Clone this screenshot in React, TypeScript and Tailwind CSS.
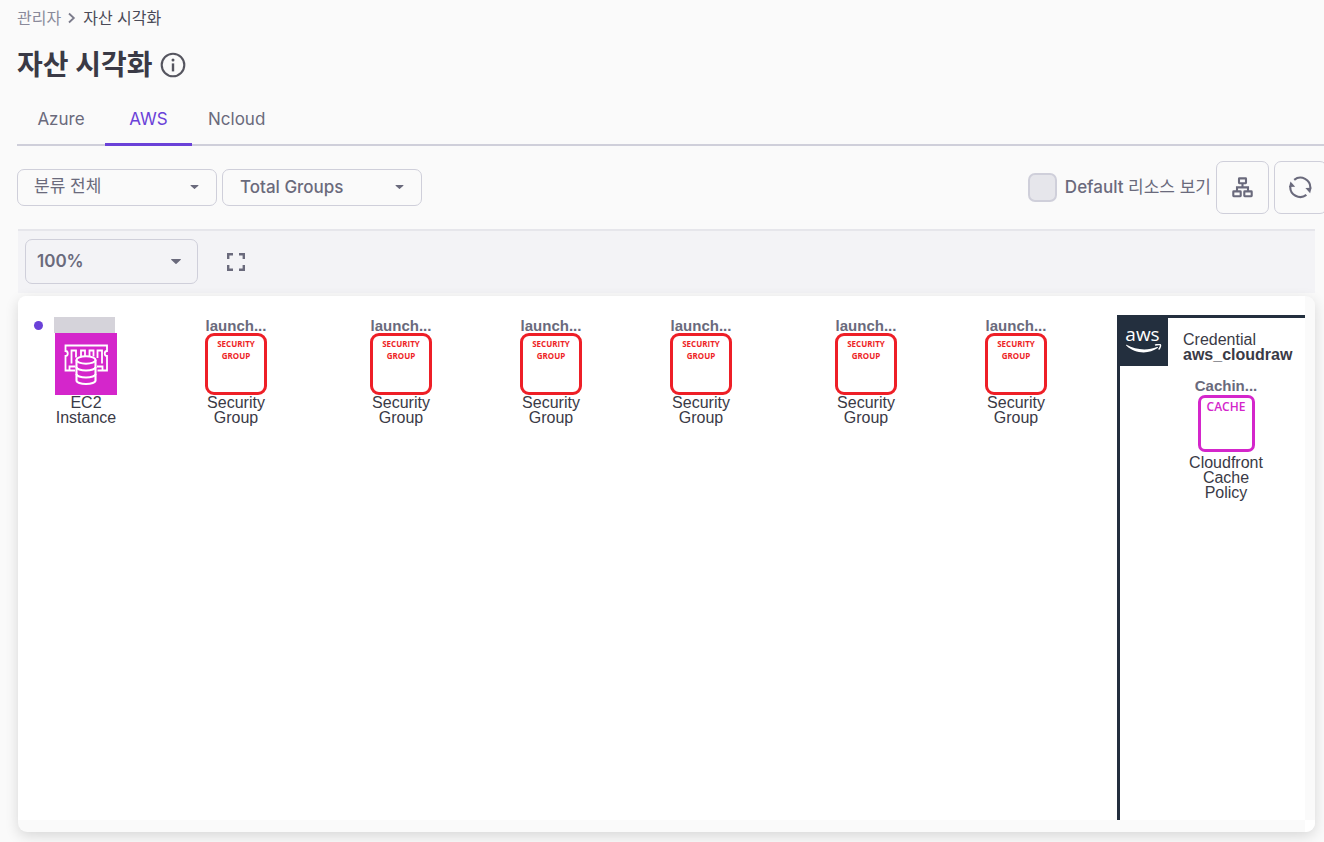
import { useState } from "react";
import type { ReactNode } from "react";

const tabs = ["Azure", "AWS", "Ncloud"];

const securityGroups = [218, 383, 533, 683, 848, 998];

function Caret({ size }: { size: string }) {
  return (
    <svg
      viewBox="0 0 10 5"
      className={`pointer-events-none absolute top-1/2 -translate-y-[3px] ${size}`}
      fill="#6a6a7c"
      aria-hidden="true"
    >
      <path d="M.6 0h8.8c.5 0 .7.5.4.8L5.5 4.8a.7.7 0 0 1-1 0L.2.8C-.1.5.1 0 .6 0Z" />
    </svg>
  );
}

function Dropdown({
  label,
  options,
  box,
  text,
  caret,
}: {
  label: string;
  options: string[];
  box: string;
  text: string;
  caret: string;
}) {
  return (
    <div className={`relative ${box}`}>
      <select
        aria-label={label}
        className={`h-full w-full appearance-none rounded-[7px] border border-[#cfcfda] bg-transparent text-[17px] text-[#6a6a7c] ${text}`}
      >
        {options.map((o) => (
          <option key={o}>{o}</option>
        ))}
      </select>
      <Caret size={caret} />
    </div>
  );
}

function InfoIcon() {
  return (
    <svg viewBox="0 0 26 26" className="size-[26px]" fill="none" aria-hidden="true">
      <circle cx="13" cy="13" r="11.3" stroke="#55555f" strokeWidth="2.1" />
      <circle cx="13" cy="7.9" r="1.5" fill="#55555f" />
      <path d="M13 11.4v8" stroke="#55555f" strokeWidth="2.4" />
    </svg>
  );
}

function TreeIcon() {
  return (
    <svg viewBox="0 0 22 22" className="size-[22px]" fill="none" stroke="#6a6a7c" strokeWidth="2.1" aria-hidden="true">
      <rect x="7" y="1.400" width="7" height="4.800" rx=".4" />
      <rect x="1.300" y="14.400" width="7.400" height="4.800" rx=".4" />
      <rect x="12.300" y="14.400" width="7.400" height="4.800" rx=".4" />
      <path d="M10.500 6.200v4M5 14.400v-4h11v4" />
    </svg>
  );
}

function RefreshIcon() {
  return (
    <svg viewBox="0 0 24 24" className="size-[24px]" fill="none" aria-hidden="true">
      <g stroke="#6a6a7c" strokeWidth="2.1">
        <path d="M5.200 3.800A10 10 0 0 1 21.300 12.500" />
        <path d="M17.400 18.900A10 10 0 0 1 1.300 10.200" />
      </g>
      <path d="M16.400 12l6.200-.2-1.500 5.400Z" fill="#6a6a7c" />
      <path d="M6.200 10.700 0 10.900l1.500-5.400Z" fill="#6a6a7c" />
    </svg>
  );
}

function FullscreenIcon() {
  return (
    <svg viewBox="0 0 18 18" className="size-[18px]" fill="none" stroke="#6a6a7c" strokeWidth="2.4" aria-hidden="true">
      <path d="M1.2 6V1.2H6M12 1.2h4.8V6M16.8 12v4.8H12M6 16.8H1.2V12" />
    </svg>
  );
}

function Ec2Icon() {
  return (
    <svg viewBox="0 0 62 62" className="size-[62px]" fill="none" aria-hidden="true">
      <rect width="62" height="62" fill="#d426cb" />
      <g stroke="#fff" strokeWidth="1.8">
        <path d="M20 37.500H10.500V23c3 0 3-5 0-5v-5.500h41.500V18c-3 0-3 5 0 5v14.500H42.500" />
        <path d="M20.500 33.500h-6v3.500M42 33.500h5.500v3.500" />
        <path d="M16.500 30.500V17.500h4.500v7M26 23.500v-6h4v5.500M34.500 23v-5.500h4v6M42.500 25v-7.500H47v13" />
      </g>
      <g stroke="#fff" strokeWidth="2.1" fill="#d426cb">
        <path d="M21.500 27v20.500c0 2 4.200 3.500 9.500 3.500s9.500-1.500 9.500-3.500V27" />
        <ellipse cx="31" cy="27" rx="9.500" ry="3.700" />
        <path d="M21.500 34c0 2 4.200 3.500 9.500 3.500s9.500-1.500 9.500-3.500M21.500 41c0 2 4.200 3.500 9.500 3.500s9.500-1.500 9.500-3.500" fill="none" />
      </g>
    </svg>
  );
}

function AwsBadge() {
  return (
    <div className="relative flex size-[51px] justify-center bg-[#232f3e] pt-[8px] font-['Open_Sans',sans-serif] text-[19px] leading-[22px] font-medium text-white">
      aws
      <svg viewBox="0 0 36 10" className="absolute top-[29px] left-[9px] h-[10px] w-[36px]" fill="none" aria-hidden="true">
        <path d="M.5.800C9.500 6 21.500 7 31 3c.9-.3 1.500.5.700 1.100C23 10.300 9 10.100.200 1.500c-.4-.5-.1-1 .3-.7Z" fill="#fff" />
        <path d="M29 1.200c2.200-1 5-.9 5.400-.4.400.6-.1 3.200-1.800 4.800" stroke="#fff" strokeWidth="1.400" />
      </svg>
    </div>
  );
}

function NodeCard({ title, caption, place, children }: { title: ReactNode; caption: string; place: string; children: ReactNode }) {
  return (
    <div className={`absolute flex -translate-x-1/2 flex-col items-center ${place}`}>
      {title}
      {children}
      <p className="text-center text-[16px] leading-[15px] text-[#3a3a46]">{caption}</p>
    </div>
  );
}

function NodeTitle({ children }: { children: string }) {
  return <p className="h-[16px] text-[15px] leading-[18px] font-bold text-[#6a6a7c]">{children}</p>;
}

export default function App() {
  const [active, setActive] = useState("AWS");
  return (
    <main className="flex min-h-screen flex-col overflow-x-hidden bg-[#fafafa] pb-[10px] pl-[17px] font-['Inter','Noto_Sans_CJK_KR',sans-serif] text-[#6a6a7c]">
      <nav aria-label="breadcrumb" className="flex h-[36px] items-center gap-[7px] text-[16px]">
        <a href="#admin" className="text-[#8a8a9a]">관리자</a>
        <svg viewBox="0 0 8 12" className="h-[12px] w-[8px]" fill="none" stroke="#7b7b8b" strokeWidth="1.800" aria-hidden="true">
          <path d="m1 1.500 4.800 4.500L1 10.500" />
        </svg>
        <span className="text-[#4a4a57]">자산 시각화</span>
      </nav>

      <header className="flex h-[58px] items-center gap-2">
        <h1 className="text-[28px] font-bold text-[#3a3a46]">자산 시각화</h1>
        <button type="button" aria-label="정보">
          <InfoIcon />
        </button>
      </header>

      <div role="tablist" className="flex h-[52px] border-b-2 border-[#cfcfda]">
        {tabs.map((t) => (
          <button
            key={t}
            type="button"
            role="tab"
            aria-selected={t === active}
            onClick={() => setActive(t)}
            className={`-mb-[2px] min-w-[87px] border-b-[3px] px-4 pt-[2px] text-[17px] first:min-w-[88px] ${
              t === active ? "border-[#6a41d8] text-[#6a41d8]" : "border-transparent"
            }`}
          >
            {t}
          </button>
        ))}
      </div>

      <div className="-mr-[3px] flex items-center gap-[5px] pt-[15px] pb-[15px]">
        <Dropdown label="분류" options={["분류 전체"]} box="h-[37px] w-[200px]" text="px-[16px] pb-[2px] font-normal" caret="right-[18px] h-[4px] w-[9px]" />
        <Dropdown label="그룹" options={["Total Groups"]} box="h-[37px] w-[200px]" text="px-[17px] font-medium" caret="right-[18px] h-[4px] w-[9px]" />
        <label className="ml-auto flex items-center gap-2 text-[17px] font-medium">
          <input
            type="checkbox"
            className="size-[29px] appearance-none rounded-[7px] border-2 border-[#cfcfda] bg-[#e6e6eb] checked:bg-[#6a41d8]"
          />
          <span>
            Default <span className="font-normal">리소스 보기</span>
          </span>
        </label>
        <button type="button" aria-label="트리 보기" className="flex size-[53px] items-center justify-center rounded-[7px] border border-[#cfcfda]">
          <TreeIcon />
        </button>
        <button type="button" aria-label="새로고침" className="flex size-[53px] items-center justify-center rounded-[7px] border border-[#cfcfda]">
          <RefreshIcon />
        </button>
      </div>

      <section className="mr-[9px] ml-px flex flex-1 flex-col">
        <div className="mb-[3px] flex h-[64px] items-center gap-[29px] border-t-2 border-[#e6e6eb] bg-[#f3f3f6] pb-px pl-[7px]">
          <Dropdown label="확대 비율" options={["100%", "75%", "50%"]} box="h-[45px] w-[173px]" text="px-[11px] font-semibold" caret="right-[17px] h-[5px] w-[10px]" />
          <button type="button" aria-label="전체 화면">
            <FullscreenIcon />
          </button>
        </div>

        <div className="grid flex-1 grid-cols-[1fr_10px] grid-rows-[1fr_12px] rounded-[9px] bg-[#fafafa] shadow-[0_4px_14px_rgba(0,0,0,0.14)]">
          <div className="relative min-h-[400px] overflow-hidden rounded-tl-[8px] bg-white font-['Liberation_Sans',sans-serif]">
            <span className="absolute top-[25px] left-[16px] size-[9px] rounded-full bg-[#6a41d8]" />
            <NodeCard
              place="top-[21px] left-[68px] w-[72px]"
              caption="EC2 Instance"
              title={<div className="mr-[3px] h-[16px] w-[61px] bg-[#d5d3da]" />}
            >
              <Ec2Icon />
            </NodeCard>
            {securityGroups.map((x) => (
              <div key={x} className="absolute top-[21px]" style={{ left: x }}>
                <NodeCard place="top-0 left-0 w-[72px]" caption="Security Group" title={<NodeTitle>launch...</NodeTitle>}>
                  <div className="h-[62px] w-[62px] rounded-[9px] border-3 border-[#ee1f27] pt-[2px] text-center font-['Open_Sans',sans-serif] text-[8px] leading-[12px] font-bold text-[#ee1f27]">
                    SECURITY
                    <br />
                    GROUP
                  </div>
                </NodeCard>
              </div>
            ))}

            <div className="absolute top-[19px] right-0 bottom-0 w-[188px] border-t-3 border-l-3 border-[#232f3e]">
              <div className="-mt-[3px] -ml-[3px] flex gap-[15px]">
                <AwsBadge />
                <p className="pt-[17px] text-[16px] leading-[15px] text-[#3a3a46]">
                  Credential
                  <br />
                  <b>aws_cloudraw</b>
                </p>
              </div>
              <NodeCard
                place="top-[59px] left-[106px] w-[84px]"
                caption="Cloudfront Cache Policy"
                title={<NodeTitle>Cachin...</NodeTitle>}
              >
                <div className="mt-[2px] mb-[3px] h-[57px] w-[57px] rounded-[7px] border-3 border-[#d426cb] text-center font-['Open_Sans',sans-serif] text-[12px] leading-[18px] font-semibold text-[#d426cb]">
                  CACHE
                </div>
              </NodeCard>
            </div>
          </div>
          <div />
          <div />
          <div className="rounded-br-[9px] bg-white" />
        </div>
      </section>
    </main>
  );
}
